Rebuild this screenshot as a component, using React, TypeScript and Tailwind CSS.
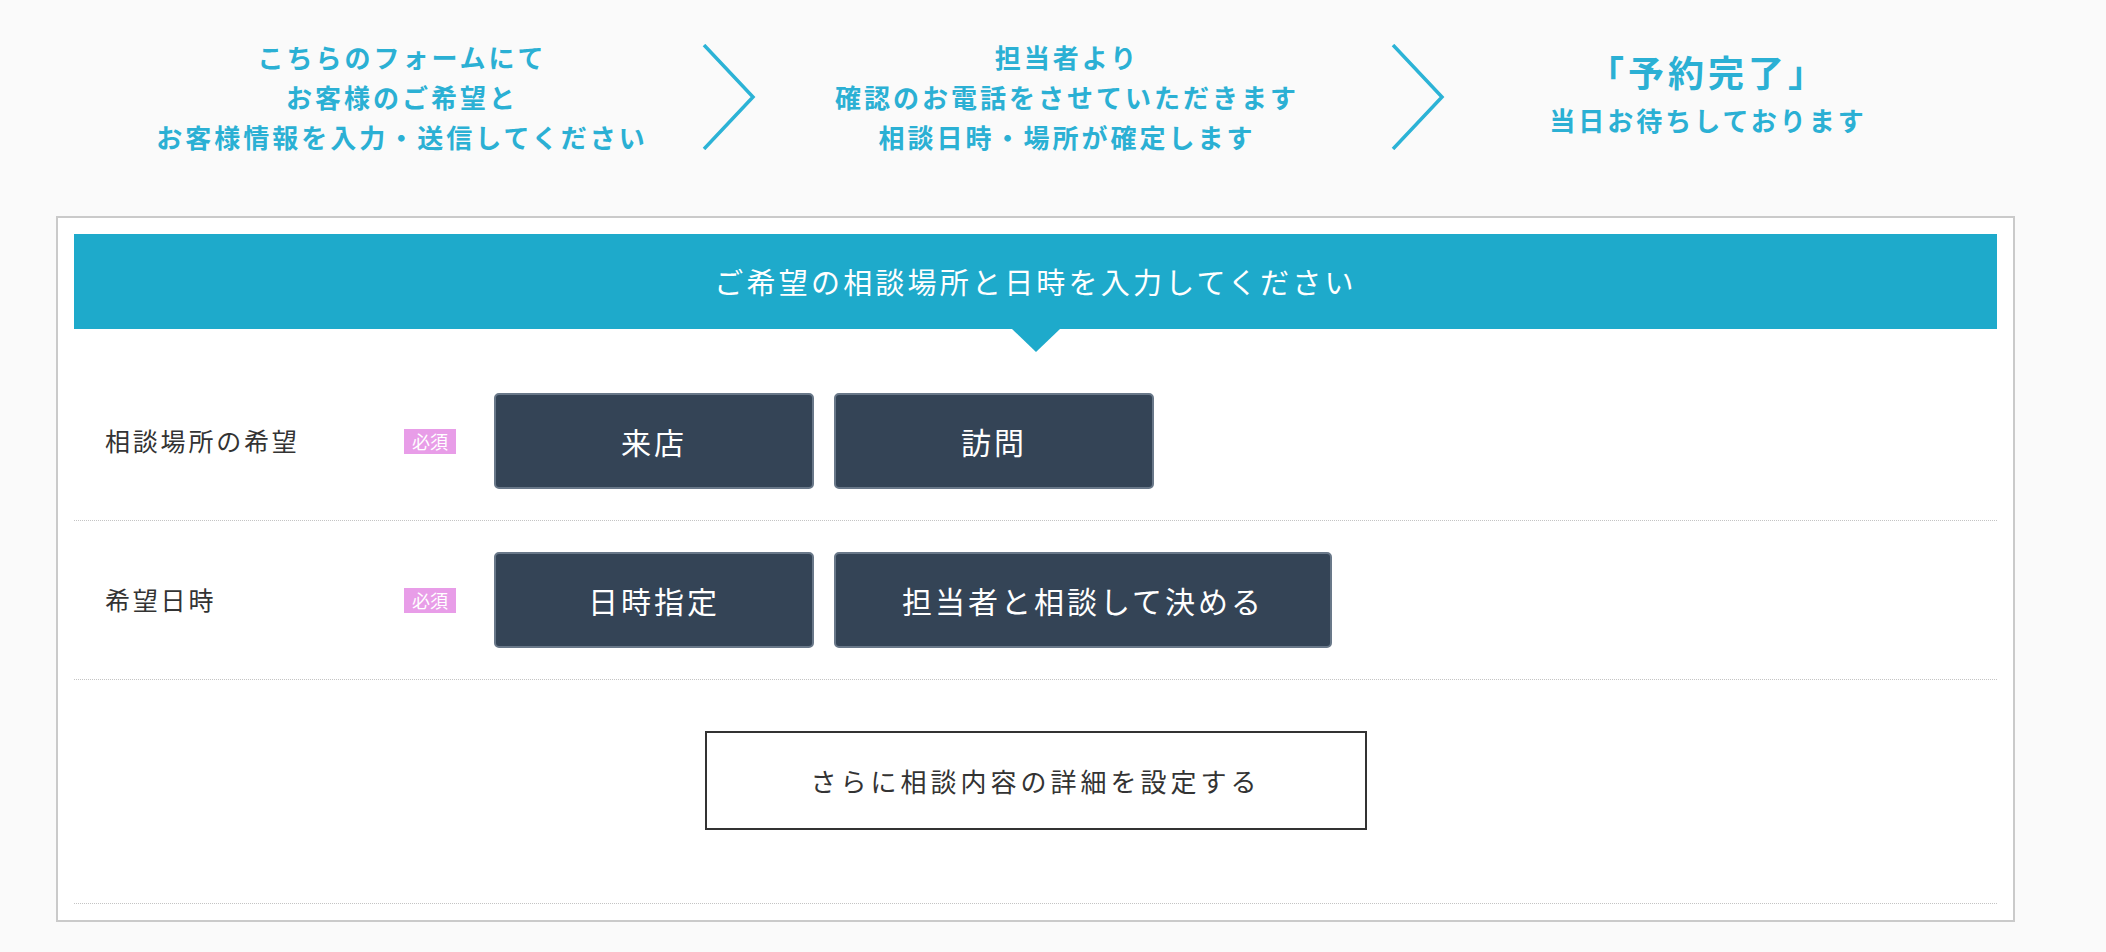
import React from 'react';

const FONT = { fontFamily: '"Noto Sans CJK JP", "Noto Sans", sans-serif' };

const Chevron: React.FC = () => (
  <svg width="54" height="106" viewBox="0 0 54 106" fill="none">
    <polyline points="2,1 51,53 2,105" stroke="#2cb3d6" strokeWidth="3.5" strokeLinejoin="miter" />
  </svg>
);

const Badge: React.FC = () => (
  <span className="w-[52px] h-[25px] bg-[#e89de8] text-white text-[18px] leading-[25px] text-center">
    必須
  </span>
);

const DarkButton: React.FC<{ children: React.ReactNode }> = ({ children }) => (
  <button className="min-w-[320px] h-[96px] px-[66px] bg-[#344456] border-2 border-[#697889] rounded-[5px] text-white text-[30px] tracking-[3px] flex items-center justify-center">
    {children}
  </button>
);

const FormRow: React.FC<{ label: string; children: React.ReactNode }> = ({ label, children }) => (
  <div className="flex items-center py-[31px] border-b border-dotted border-[#c4c4c4]">
    <div className="w-[330px] pl-[31px] text-[25px] tracking-[2.8px] text-[#333]">{label}</div>
    <Badge />
    <div className="flex gap-[20px] ml-[38px]">{children}</div>
  </div>
);

export default function App() {
  return (
    <div className="min-h-[952px] bg-[#fafafa]" style={FONT}>
      {/* steps */}
      <div className="h-[194px] flex items-center pl-[152px] text-[#2bb0d4] font-bold text-[26px] tracking-[3px] leading-[40px] text-center">
        <div className="w-[500px]">
          <p>こちらのフォームにて</p>
          <p>お客様のご希望と</p>
          <p>お客様情報を入力・送信してください</p>
        </div>
        <div className="ml-[50px] w-[54px] flex">
          <Chevron />
        </div>
        <div className="ml-[31px] w-[560px]">
          <p>担当者より</p>
          <p>確認のお電話をさせていただきます</p>
          <p>相談日時・場所が確定します</p>
        </div>
        <div className="ml-[44px] w-[54px] flex">
          <Chevron />
        </div>
        <div className="ml-[63px] w-[400px] pb-[7px]">
          <p className="text-[36px] tracking-[4px] leading-[46px] mb-[7px]">「予約完了」</p>
          <p className="leading-[38px]">当日お待ちしております</p>
        </div>
      </div>

      {/* form box */}
      <div className="mt-[22px] ml-[56px] w-[1959px] border-2 border-[#cacaca] bg-white p-4">
        <div className="relative h-[95px] bg-[#1eaacb] flex items-center justify-center text-white text-[29px] tracking-[3.2px]">
          ご希望の相談場所と日時を入力してください
          <span className="absolute left-1/2 -translate-x-1/2 top-full w-0 h-0 border-l-[24px] border-r-[24px] border-t-[23px] border-l-transparent border-r-transparent border-t-[#1eaacb]" />
        </div>

        <div className="mt-[33px]">
          <FormRow label="相談場所の希望">
            <DarkButton>来店</DarkButton>
            <DarkButton>訪問</DarkButton>
          </FormRow>
          <FormRow label="希望日時">
            <DarkButton>日時指定</DarkButton>
            <DarkButton>担当者と相談して決める</DarkButton>
          </FormRow>
          <div className="flex justify-center pt-[51px] pb-[73px] border-b border-dotted border-[#c4c4c4]">
            <button className="w-[662px] h-[99px] border-2 border-[#333] bg-white text-[#333] text-[26px] tracking-[4px]">
              さらに相談内容の詳細を設定する
            </button>
          </div>
        </div>
      </div>
    </div>
  );
}
